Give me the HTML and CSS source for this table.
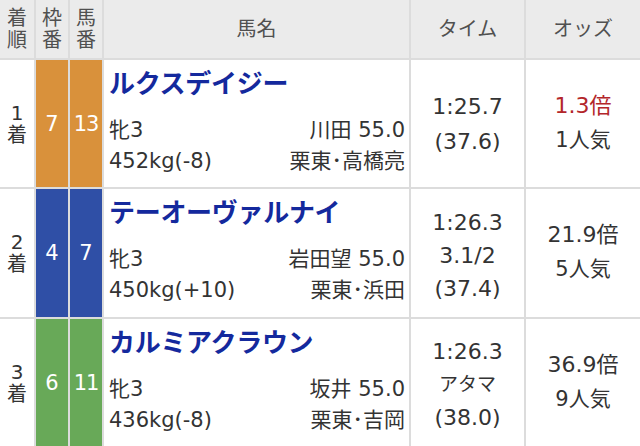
FILE: index.html
```html
<!DOCTYPE html>
<html lang="ja">
<head>
<meta charset="utf-8">
<link rel="stylesheet" href="styles.css">
</head>
<body>
<div class="grid">
  <div class="h rank"><div class="stack"><div>着</div><div>順</div></div></div>
  <div class="h"><div class="stack"><div>枠</div><div>番</div></div></div>
  <div class="h"><div class="stack"><div>馬</div><div>番</div></div></div>
  <div class="h"><div>馬名</div></div>
  <div class="h"><div>タイム</div></div>
  <div class="h"><div>オッズ</div></div>

  <div class="c rank"><div class="stack"><div>1</div><div>着</div></div></div>
  <div class="c frame f7"><div>7</div></div>
  <div class="c frame f7 num"><div>13</div></div>
  <div class="c name">
    <div class="hn">ルクスデイジー</div>
    <div class="sub"><span>牝3</span><span>川田 55.0</span></div>
    <div class="sub"><span>452kg(-8)</span><span>栗東･高橋亮</span></div>
  </div>
  <div class="c time"><div class="stack"><div>1:25.7</div><div>(37.6)</div></div></div>
  <div class="c odds"><div class="stack"><div class="red">1.3倍</div><div class="pop">1人気</div></div></div>

  <div class="c rank"><div class="stack"><div>2</div><div>着</div></div></div>
  <div class="c frame f4"><div>4</div></div>
  <div class="c frame f4"><div>7</div></div>
  <div class="c name">
    <div class="hn">テーオーヴァルナイ</div>
    <div class="sub"><span>牝3</span><span>岩田望 55.0</span></div>
    <div class="sub"><span>450kg(+10)</span><span>栗東･浜田</span></div>
  </div>
  <div class="c time three"><div class="stack"><div>1:26.3</div><div>3.1/2</div><div>(37.4)</div></div></div>
  <div class="c odds"><div class="stack"><div>21.9倍</div><div class="pop">5人気</div></div></div>

  <div class="c rank"><div class="stack"><div>3</div><div>着</div></div></div>
  <div class="c frame f6"><div>6</div></div>
  <div class="c frame f6 num"><div>11</div></div>
  <div class="c name">
    <div class="hn">カルミアクラウン</div>
    <div class="sub"><span>牝3</span><span>坂井 55.0</span></div>
    <div class="sub"><span>436kg(-8)</span><span>栗東･吉岡</span></div>
  </div>
  <div class="c time three"><div class="stack"><div>1:26.3</div><div class="margin">アタマ</div><div>(38.0)</div></div></div>
  <div class="c odds"><div class="stack"><div>36.9倍</div><div class="pop">9人気</div></div></div>
</div>
</body>
</html>
```

FILE: styles.css
```css
html, body {
  margin: 0;
  padding: 0;
  background: #ffffff;
}
body {
  font-family: "DejaVu Sans", "Noto Sans CJK JP", sans-serif;
  color: #333333;
}
.grid {
  width: 640px;
  height: 446px;
  display: grid;
  grid-template-columns: 34px 32px 32px 305px 113px 114px;
  grid-template-rows: 58px 127px 128px 127px;
  gap: 2px;
  background: #dcdcdc;
  overflow: hidden;
}
.h {
  background: #ebebeb;
  color: #505050;
  font-size: 20px;
  line-height: 22px;
  display: flex;
  align-items: center;
  justify-content: center;
  text-align: center;
}
.c {
  background: #ffffff;
  display: flex;
  align-items: center;
  justify-content: center;
  text-align: center;
  white-space: nowrap;
}
.stack {
  display: flex;
  flex-direction: column;
  align-items: center;
}
.c.rank {
  font-size: 20px;
}
.c.rank .stack {
  line-height: 22px;
}
.frame {
  color: #ffffff;
  font-size: 21px;
}
.num {
  letter-spacing: -1px;
}
.f7 { background: #d9913b; }
.f4 { background: #2f4fa6; }
.f6 { background: #68a958; }
.name {
  flex-direction: column;
  align-items: stretch;
  justify-content: flex-start;
  padding: 4px 4px 0 5px;
  text-align: left;
}
.hn {
  color: #14299d;
  font-family: "Noto Sans CJK JP", sans-serif;
  font-size: 26px;
  font-weight: 700;
  line-height: 36px;
  margin-bottom: 15px;
  letter-spacing: -0.3px;
}
.sub {
  display: flex;
  justify-content: space-between;
  font-size: 21px;
  line-height: 31px;
}
.time {
  font-size: 22px;
  line-height: 35px;
}
.time.three .stack {
  line-height: 33px;
  padding-top: 4px;
}
.margin {
  font-size: 19px;
}
.odds {
  font-size: 22px;
  line-height: 34px;
}
.odds .stack {
  padding-bottom: 2px;
}
.red {
  color: #b3262a;
}
.pop {
  font-size: 21px;
}
```
